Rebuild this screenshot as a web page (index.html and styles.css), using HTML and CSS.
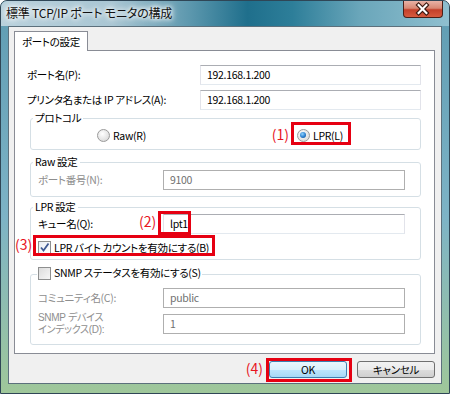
FILE: index.html
```html
<!DOCTYPE html>
<html lang="ja">
<head>
    <meta charset="UTF-8">
    <meta name="viewport" content="width=device-width, initial-scale=1.0">
    <title>標準 TCP/IP ポート モニタの構成</title>
    <link rel="stylesheet" href="styles.css">
</head>
<body>
    <div class="window">
        <div class="titlebar">
            <span class="title">標準 TCP/IP ポート モニタの構成</span>
            <span class="close-btn">
                <svg width="40" height="17" viewBox="0 0 40 17">
                    <path d="M16 4 L24 12 M24 4 L16 12" stroke="#3b1810" stroke-width="4.5" stroke-linecap="square" fill="none"/>
                    <path d="M16 4 L24 12 M24 4 L16 12" stroke="#ffffff" stroke-width="2.2" stroke-linecap="square" fill="none"/>
                </svg>
            </span>
        </div>

        <div class="frame-body">
            <div class="client">
                <!-- pestañas -->
                <div class="tabs">
                    <span class="tab">ポートの設定</span>
                </div>

                <div class="panel">
                    <div class="row top-row">
                        <span class="label">ポート名(P):</span>
                        <span class="textbox">192.168.1.200</span>
                    </div>
                    <div class="row top-row">
                        <span class="label">プリンタ名または IP アドレス(A):</span>
                        <span class="textbox">192.168.1.200</span>
                    </div>

                    <fieldset class="group protocol">
                        <legend>プロトコル</legend>
                        <div class="radio-row">
                            <span class="radio-item"><span class="radio"></span>Raw(R)</span>
                            <span class="radio-item marked">
                                <span class="radio checked"></span>LPR(L)
                                <span class="note note-1">(1)</span>
                                <span class="mark mark-1"></span>
                            </span>
                        </div>
                    </fieldset>

                    <fieldset class="group raw">
                        <legend>Raw 設定</legend>
                        <div class="row group-row disabled">
                            <span class="label">ポート番号(N):</span>
                            <span class="textbox">9100</span>
                        </div>
                    </fieldset>

                    <fieldset class="group lpr">
                        <legend>LPR 設定</legend>
                        <div class="row group-row">
                            <span class="label">キュー名(Q):</span>
                            <span class="textbox marked">
                                lpt1
                                <span class="note note-2">(2)</span>
                                <span class="mark mark-2"></span>
                            </span>
                        </div>
                        <div class="check-row">
                            <span class="check-item marked">
                                <span class="checkbox checked">
                                    <svg width="11" height="11" viewBox="0 0 11 11">
                                        <path d="M2 5.5 L4.5 8.5 L9.5 1.5" stroke="#3f5a94" stroke-width="1.8" fill="none"/>
                                    </svg>
                                </span>LPR バイト カウントを有効にする(B)
                                <span class="note note-3">(3)</span>
                                <span class="mark mark-3"></span>
                            </span>
                        </div>
                    </fieldset>

                    <fieldset class="group snmp">
                        <legend><span class="check-item"><span class="checkbox"></span>SNMP ステータスを有効にする(S)</span></legend>
                        <div class="row group-row disabled">
                            <span class="label">コミュニティ名(C):</span>
                            <span class="textbox">public</span>
                        </div>
                        <div class="row group-row disabled">
                            <span class="label two-line">SNMP デバイス<br>インデックス(D):</span>
                            <span class="textbox">1</span>
                        </div>
                    </fieldset>
                </div>

                <div class="buttons">
                    <span class="button default marked">
                        OK
                        <span class="note note-4">(4)</span>
                        <span class="mark mark-4"></span>
                    </span>
                    <span class="button">キャンセル</span>
                </div>
            </div>
        </div>
    </div>
</body>
</html>
```

FILE: styles.css
```css
* {
    box-sizing: border-box;
}

body {
    margin: 0;
    font-family: "Noto Sans CJK JP", "Noto Sans", sans-serif;
    font-size: 10.5px;
    letter-spacing: -0.3px;
    font-feature-settings: "palt" 1;
    color: #000;
    background: #fff;
}

.window {
    width: 450px;
    height: 394px;
    display: flex;
    flex-direction: column;
    border: 1px solid #2f4656;
    border-radius: 7px 7px 0 0;
    overflow: hidden;
    background: linear-gradient(to bottom, #5f9cb2 0%, #7db3c6 55%, #9fc79a 100%);
}

.titlebar {
    height: 25px;
    display: flex;
    justify-content: space-between;
    align-items: flex-start;
    background: linear-gradient(to right, #b9d1dc 0%, #a9c6d3 25%, #5d98ae 42%, #1f6f8c 55%, #2d7e99 65%, #6aa6ba 80%, #8fbfcf 100%);
}

.title {
    padding: 5px 0 0 5px;
    font-size: 12px;
    letter-spacing: -0.2px;
    line-height: 14px;
    color: #111;
    text-shadow: 0 0 4px #fff, 0 0 6px #fff, 0 0 8px #fff;
}

.close-btn {
    width: 40px;
    height: 17px;
    margin-right: 6px;
    border: 1px solid #4a1f18;
    border-top: none;
    border-radius: 0 0 4px 4px;
    background: linear-gradient(to bottom, #e8b2a6 0%, #d88874 45%, #c3402a 55%, #d65a3e 100%);
    display: flex;
}

.close-btn svg {
    margin-left: -1px;
}

.frame-body {
    flex: 1;
    padding: 0 7px 9px 7px;
    display: flex;
}

.client {
    flex: 1;
    display: flex;
    flex-direction: column;
    background: #f0f0f0;
    border: 1px solid #5c707c;
    padding: 4px 6px 0 5px;
}

.tabs {
    display: flex;
    position: relative;
    z-index: 1;
}

.tab {
    height: 20px;
    margin-bottom: -1px;
    padding: 2px 7px 0 7px;
    line-height: 16px;
    background: #fff;
    border: 1px solid #898c95;
    border-bottom: none;
}

.panel {
    flex: 1;
    background: #fff;
    border: 1px solid #898c95;
    padding: 14px 13px 0 12px;
}

.row {
    display: grid;
    align-items: center;
}

.top-row {
    grid-template-columns: 173px 1fr;
    margin-bottom: 5px;
}

.top-row + .top-row {
    margin-bottom: 0;
}

.group-row {
    grid-template-columns: 125px 1fr;
}

.label {
    line-height: 14px;
}

.two-line {
    font-family: "Liberation Sans", "Noto Sans CJK JP", sans-serif;
    font-size: 10px;
    line-height: 12px;
    margin: -2px 0;
}

.textbox {
    height: 20px;
    padding: 0 6px;
    line-height: 18px;
    border: 1px solid #e2e3ea;
    border-top-color: #abadb3;
    border-bottom-color: #e3e9ef;
    background: #fff;
}

.disabled .label {
    color: #8e8e8e;
}

.disabled .textbox {
    color: #707070;
    border-color: #afafaf;
    background: #fff;
}

.group {
    margin: 0 0 0 3px;
    padding: 0 15px 4px 7px;
    border: 1px solid #d5dfe5;
    border-radius: 3px;
    min-width: 0;
}

.group legend {
    padding: 0 2px;
    margin-left: -5px;
    line-height: 14px;
}

.protocol {
    margin-top: 1px;
    padding: 0 0 4px 7px;
}

.radio-row {
    height: 20px;
    display: flex;
    align-items: center;
    justify-content: space-between;
    padding: 0 77px 0 59px;
}

.radio-item,
.check-item {
    display: inline-flex;
    align-items: center;
    gap: 3px;
}

.radio {
    width: 13px;
    height: 13px;
    border-radius: 50%;
    border: 1px solid #9a9a9a;
    background: radial-gradient(circle at 40% 35%, #ffffff 0%, #e4e4e4 60%, #cfcfcf 100%);
    display: inline-flex;
    align-items: center;
    justify-content: center;
}

.radio.checked::after {
    content: "";
    width: 6px;
    height: 6px;
    border-radius: 50%;
    background: radial-gradient(circle at 40% 35%, #8fd2ff 0%, #2a7fcf 55%, #0f4180 100%);
}

.raw {
    margin-top: 5px;
    padding: 1px 15px 6px 7px;
}

.lpr {
    margin-top: 3px;
    padding: 0 15px 2px 7px;
}

.check-row {
    height: 20px;
    margin-top: 3px;
    display: flex;
    align-items: center;
}

.checkbox {
    width: 13px;
    height: 13px;
    border: 1px solid #8e8f8f;
    background: linear-gradient(to bottom right, #dcdcdc 0%, #f7f7f7 100%);
    display: inline-flex;
    align-items: center;
    justify-content: center;
}

.checkbox.checked {
    background: linear-gradient(to bottom right, #e8ecf4 0%, #ffffff 100%);
}

.snmp {
    margin-top: 5px;
    padding: 4px 15px 10px 7px;
}

.snmp legend {
    margin-left: -1px;
    padding: 0 1px;
    line-height: 16px;
}

.snmp .group-row + .group-row {
    margin-top: 6px;
}

.buttons {
    display: flex;
    justify-content: flex-end;
    gap: 10px;
    margin: 7px 0 5px 0;
}

.button {
    width: 78px;
    height: 17px;
    line-height: 15px;
    text-align: center;
    border: 1px solid #707070;
    border-radius: 3px;
    background: linear-gradient(to bottom, #f2f2f2 0%, #ebebeb 50%, #dddddd 50%, #cfcfcf 100%);
}

.button.default {
    border-color: #3c7fb1;
    background: linear-gradient(to bottom, #eaf6fd 0%, #d9f0fc 50%, #bee6fd 50%, #a7d9f5 100%);
}

/* anotaciones rojas */
.marked {
    position: relative;
}

.mark {
    position: absolute;
    border: 3px solid #e60012;
}

.note {
    position: absolute;
    color: #e8141e;
    font-size: 14px;
    line-height: 16px;
    letter-spacing: 0;
    font-feature-settings: normal;
}

.mark-1 {
    left: -6px;
    top: -6px;
    width: 60px;
    height: 23px;
}

.note-1 {
    right: calc(100% + 8px);
    top: -2px;
}

.mark-2 {
    left: -6px;
    top: -4px;
    width: 33px;
    height: 24px;
}

.note-2 {
    left: -25px;
    top: -2px;
}

.mark-3 {
    left: -5px;
    top: -5px;
    width: 182px;
    height: 21px;
}

.note-3 {
    left: -23px;
    top: -4px;
}

.mark-4 {
    left: -4px;
    top: -4px;
    right: -6px;
    bottom: -5px;
}

.note-4 {
    right: calc(100% + 7px);
    top: -2px;
}
```
